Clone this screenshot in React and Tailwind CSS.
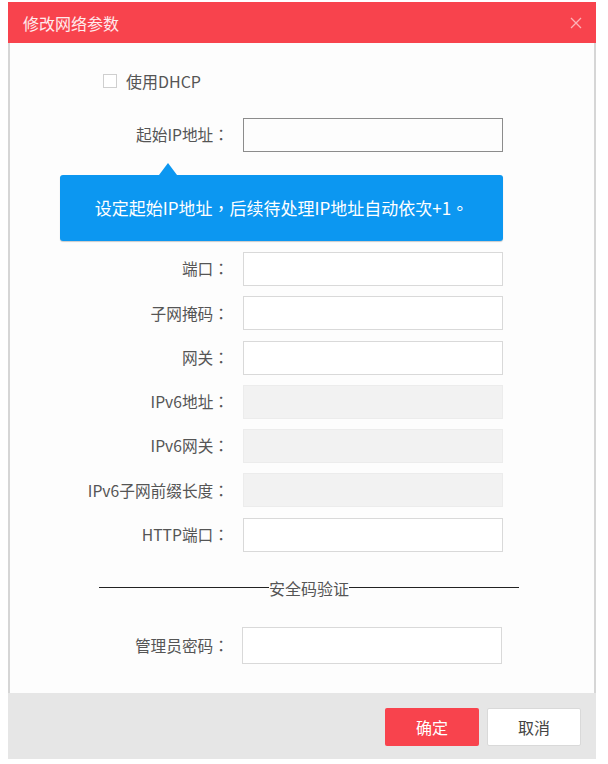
import React from "react";

const rows = [
  { label: "端口" },
  { label: "子网掩码" },
  { label: "网关" },
  { label: "IPv6地址", disabled: true },
  { label: "IPv6网关", disabled: true },
  { label: "IPv6子网前缀长度", disabled: true },
  { label: "HTTP端口" },
];

// 콜론은 가운데 정렬된 전각 문자로
const Label = ({ text }) => (
  <label className="w-[219px] shrink-0 text-right text-[15.7px] text-[#555]">
    {text}
    <span className="font-['Noto_Sans_CJK_TC',sans-serif]">：</span>
  </label>
);

const FormRow = ({ label, disabled, focused, className = "" }) => (
  <div className={`flex items-center ${className}`}>
    <Label text={label} />
    <input
      type="text"
      disabled={disabled}
      className={`ml-[14px] w-[260px] h-[34px] border px-2 text-sm outline-none ${
        focused
          ? "border-[#8c8c8c]"
          : disabled
          ? "border-[#ececec] bg-[#f2f2f2]"
          : "border-[#d9d9d9] bg-white"
      }`}
    />
  </div>
);

const App = () => {
  return (
    <div className="w-[608px] h-[764px] bg-white pt-[2px] pl-[8px] font-['Noto_Sans_CJK_SC',sans-serif]">
      <div className="w-[588px]">
        {/* 헤더 */}
        <div className="h-[41px] bg-[#f8434d] flex items-center justify-between pl-[15px] pr-[14px]">
          <span className="text-[16px] text-white/90">修改网络参数</span>
          <svg width="12" height="12" viewBox="0 0 12 12" className="text-white/60">
            <path d="M1 1 L11 11 M11 1 L1 11" stroke="currentColor" strokeWidth="1.3" />
          </svg>
        </div>

        {/* 본문 */}
        <div className="border-x-2 border-[#d6d6d6] bg-[#fdfdfd] pt-[28px] pb-[29px]">
          <div className="flex items-center h-[20px] pl-[93px]">
            <span className="w-[14px] h-[14px] border border-[#cfcfcf] bg-white" />
            <span className="ml-[9px] text-[16px] text-[#555]">使用DHCP</span>
          </div>

          <FormRow label="起始IP地址" focused className="mt-[27px]" />

          {/* 툴팁 */}
          <div className="relative ml-[50px] mt-[23px] w-[443px] h-[66px] rounded-[3px] bg-[#0c97f1] shadow-[0_1px_1px_rgba(0,0,0,0.2)] flex items-center justify-center">
            <span className="absolute -top-[12px] left-[99px] w-0 h-0 border-x-[9px] border-x-transparent border-b-[12px] border-b-[#0c97f1]" />
            <span className="text-[17px] text-white font-['Noto_Sans_CJK_TC',sans-serif]">
              设定起始IP地址，后续待处理IP地址自动依次+1。
            </span>
          </div>

          <div className="mt-[11px] flex flex-col gap-[10.3px]">
            {rows.map((r) => (
              <FormRow key={r.label} label={r.label} disabled={r.disabled} />
            ))}
          </div>

          {/* 구분선 */}
          <div className="mt-[26px] ml-[89px] w-[420px] h-[20px] flex items-center">
            <span className="flex-1 h-px bg-[#222]" />
            <span className="text-[16px] text-[#555] leading-none">安全码验证</span>
            <span className="flex-1 h-px bg-[#222]" />
          </div>

          <div className="mt-[29px] flex items-center">
            <Label text="管理员密码" />
            <input
              type="password"
              className="ml-[13px] w-[260px] h-[37px] border border-[#d9d9d9] bg-white outline-none"
            />
          </div>
        </div>

        {/* 하단 버튼 */}
        <div className="h-[66px] bg-[#e6e6e6] flex justify-end items-start pt-[15px] pr-[15px] gap-[8px]">
          <button className="w-[94px] h-[38px] rounded-[2px] bg-[#f8434d] text-white text-[16px]">
            确定
          </button>
          <button className="w-[94px] h-[38px] rounded-[2px] bg-white border border-[#d9d9d9] text-[#444] text-[16px]">
            取消
          </button>
        </div>
      </div>
    </div>
  );
};

export default App;
